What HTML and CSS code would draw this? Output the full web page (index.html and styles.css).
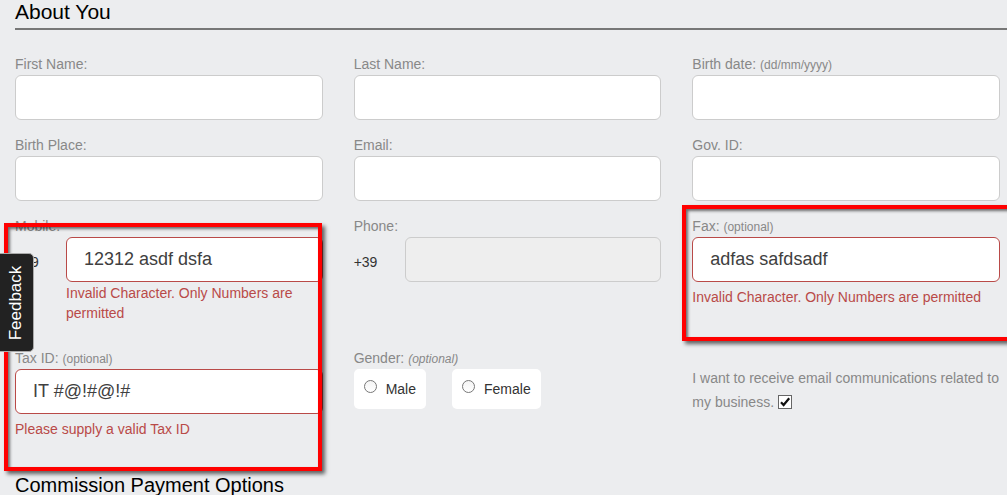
FILE: index.html
```html
<!DOCTYPE html>
<html>
<head>
<meta charset="utf-8">
<link rel="stylesheet" href="styles.css">
</head>
<body>
<div class="page">
  <h2 class="section-title">About You</h2>
  <div class="form-grid">
    <div class="field">
      <label class="label">First Name:</label>
      <input class="input" type="text">
    </div>
    <div class="field">
      <label class="label">Last Name:</label>
      <input class="input" type="text">
    </div>
    <div class="field">
      <label class="label">Birth date: <small class="hint">(dd/mm/yyyy)</small></label>
      <input class="input" type="text">
    </div>

    <div class="field">
      <label class="label">Birth Place:</label>
      <input class="input" type="text">
    </div>
    <div class="field">
      <label class="label">Email:</label>
      <input class="input" type="text">
    </div>
    <div class="field">
      <label class="label">Gov. ID:</label>
      <input class="input" type="text">
    </div>

    <div class="field">
      <label class="label">Mobile:</label>
      <div class="prefixed">
        <span class="prefix">+39</span>
        <div class="prefixed-body">
          <input class="input input-error" type="text" value="12312 asdf dsfa">
          <div class="error-msg error-tight">Invalid Character. Only Numbers are permitted</div>
        </div>
      </div>
    </div>
    <div class="field">
      <label class="label">Phone:</label>
      <div class="prefixed">
        <span class="prefix">+39</span>
        <div class="prefixed-body">
          <input class="input" type="text" disabled>
        </div>
      </div>
    </div>
    <div class="field">
      <label class="label">Fax: <small class="hint">(optional)</small></label>
      <input class="input input-error" type="text" value="adfas safdsadf">
      <div class="error-msg">Invalid Character. Only Numbers are permitted</div>
    </div>

    <div class="field">
      <label class="label">Tax ID: <small class="hint">(optional)</small></label>
      <input class="input input-error" type="text" value="IT #@!#@!#">
      <div class="error-msg">Please supply a valid Tax ID</div>
    </div>
    <div class="field">
      <label class="label">Gender: <small class="hint hint-italic">(optional)</small></label>
      <div class="radio-group">
        <label class="radio-box"><span class="radio"></span><span class="radio-text">Male</span></label>
        <label class="radio-box"><span class="radio"></span><span class="radio-text">Female</span></label>
      </div>
    </div>
    <div class="field">
      <p class="consent">I want to receive email communications related to my business. <span class="checkbox"><svg width="12" height="12" viewBox="0 0 12 12"><path d="M2 6.2 L4.6 9 L10.2 2.2" fill="none" stroke="#111" stroke-width="2.2"/></svg></span></p>
    </div>
  </div>
  <h2 class="section-title section-title-plain">Commission Payment Options</h2>

  <div class="highlight highlight-left"></div>
  <div class="highlight highlight-right"></div>
  <div class="feedback-tab"><span class="feedback-text">Feedback</span></div>
</div>
</body>
</html>
```

FILE: styles.css
```css
html, body {
  margin: 0;
  padding: 0;
  background: #ecedef;
  overflow: hidden;
}

body {
  font-family: "Liberation Sans", Arial, sans-serif;
  width: 1007px;
  height: 495px;
}

.page {
  position: relative;
  padding-left: 15px;
  height: 495px;
}

.section-title {
  margin: 0;
  font-size: 21px;
  line-height: 24px;
  font-weight: normal;
  color: #000;
  padding-bottom: 4px;
  border-bottom: 2px solid #777;
}

.section-title-plain {
  border-bottom: none;
  font-size: 20px;
  margin-top: 34px;
}

.form-grid {
  margin-top: 24px;
  margin-right: 7px;
  display: grid;
  grid-template-columns: repeat(3, 1fr);
  column-gap: 31px;
  row-gap: 15px;
}

.field {
  display: flex;
  flex-direction: column;
  min-width: 0;
}

.label {
  display: block;
  height: 20px;
  font-size: 14px;
  line-height: 20px;
  color: #888;
  margin-bottom: 1px;
  white-space: nowrap;
}

.hint {
  font-size: 12px;
  line-height: 1;
}

.hint-italic {
  font-style: italic;
}

.input {
  box-sizing: border-box;
  display: block;
  width: 100%;
  height: 45px;
  margin: 0;
  border: 1px solid #ccc;
  border-radius: 6px;
  background: #fff;
  padding: 0 17px;
  font-family: "Liberation Sans", Arial, sans-serif;
  font-size: 18px;
  color: #404040;
  outline: none;
}

.input:disabled {
  background: #eee;
  border-color: #ccc;
}

.input-error {
  border-color: #b94a48;
}

.error-msg {
  font-size: 14px;
  line-height: 20px;
  color: #b94a48;
  margin-top: 5px;
}

.error-tight {
  margin-top: 1px;
  padding-bottom: 10px;
}

.prefixed {
  display: flex;
  align-items: flex-start;
}

.prefix {
  width: 51px;
  flex: none;
  font-size: 14px;
  line-height: 45px;
  height: 45px;
  color: #333;
  padding-top: 3px;
  box-sizing: border-box;
}

.prefixed-body {
  flex: 1;
  min-width: 0;
}

.radio-group {
  display: flex;
  gap: 26px;
}

.radio-box {
  display: flex;
  align-items: center;
  height: 40px;
  padding: 0 10px;
  background: #fff;
  border-radius: 5px;
  gap: 9px;
}

.radio {
  width: 13px;
  height: 13px;
  box-sizing: border-box;
  border: 1px solid #777;
  border-radius: 50%;
  background: linear-gradient(#f4f4f4, #fff);
  margin-bottom: 5px;
}

.radio-text {
  font-size: 14px;
  color: #333;
}

.consent {
  margin: 18px 0 0 0;
  font-size: 14px;
  line-height: 24px;
  color: #888;
}

.checkbox {
  display: inline-flex;
  align-items: center;
  justify-content: center;
  width: 14px;
  height: 14px;
  box-sizing: border-box;
  border: 1px solid #666;
  background: #fff;
  vertical-align: -1px;
}

.highlight {
  position: absolute;
  box-sizing: border-box;
  border: 4px solid #ff0000;
  box-shadow: 3px 3px 4px rgba(0, 0, 0, 0.6), inset 2px 2px 3px rgba(0, 0, 0, 0.55);
  pointer-events: none;
}

.highlight-left {
  left: 4px;
  top: 223px;
  width: 318px;
  height: 248px;
}

.highlight-right {
  left: 682px;
  top: 205px;
  width: 340px;
  height: 136px;
}

.feedback-tab {
  position: absolute;
  left: -1px;
  top: 253px;
  width: 35px;
  height: 99px;
  box-sizing: border-box;
  background: #222;
  border: 1px solid #aaa;
  border-radius: 0 5px 5px 0;
  display: flex;
  align-items: center;
  justify-content: center;
}

.feedback-text {
  transform: rotate(-90deg);
  color: #fff;
  font-size: 17px;
  white-space: nowrap;
}
```
